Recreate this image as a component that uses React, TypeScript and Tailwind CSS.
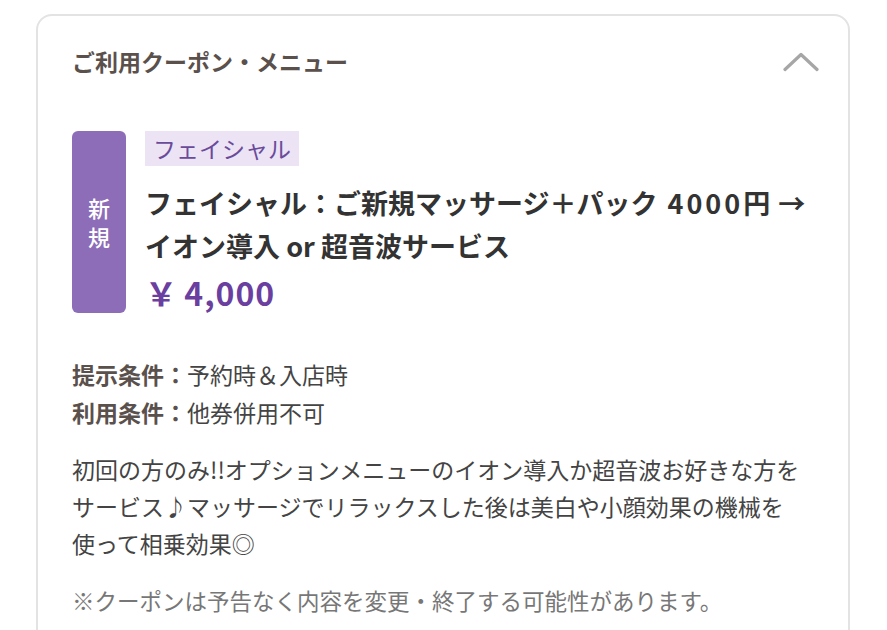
import React from "react";

const font = { fontFamily: '"Noto Sans CJK JP", "Noto Sans", sans-serif' };

export default function App() {
  return (
    <div className="w-[887px] h-[630px] overflow-hidden bg-white" style={font}>
      <div className="mt-[14px] ml-[36px] w-[814px] h-[700px] border-2 border-[#e3e3e3] rounded-[16px] px-[34px] pt-[21px]">
        <div className="flex h-[48px] items-center justify-between">
          <div className="text-[23px] font-bold text-[#5a504c]">ご利用クーポン・メニュー</div>
          <svg width="36" height="20" viewBox="0 0 36 20" className="mr-[-5px] mt-[2px]">
            <polyline points="2,17.5 18,2.5 34,17.5" fill="none" stroke="#a6a6a6" strokeWidth="3.2" strokeLinecap="round" strokeLinejoin="round" />
          </svg>
        </div>

        <div className="mt-[46px] flex gap-[19px]">
          <div className="w-[54px] h-[182px] shrink-0 rounded-[6px] bg-[#8d6cb8] flex flex-col items-center justify-center text-white text-[22px] font-medium leading-[29px]">
            <span>新</span>
            <span>規</span>
          </div>
          <div className="flex-1 min-w-0">
            <div className="inline-block h-[35px] bg-[#ece3f5] px-[8px] text-[23px] leading-[35px] text-[#6a4b9a]">
              フェイシャル
            </div>
            <div className="mt-[15px] whitespace-nowrap text-[27px] font-bold leading-[43px] text-[#333333]">
              フェイシャル：ご新規マッサージ＋パック<span className="ml-[10px] tracking-[3px]">4000</span>円<span className="ml-[8px]">→</span>
              <br />
              イオン導入 or 超音波サービス
            </div>
            <div className="mt-[5px] text-[32px] font-bold leading-[40px] text-[#6b3fa0]">
              ￥ <span className="tracking-[1px]">4,000</span>
            </div>
          </div>
        </div>

        <div className="mt-[42px] text-[23px] leading-[38px] text-[#444444]">
          <div>
            <span className="font-bold text-[#5a504c]">提示条件：</span>予約時＆入店時
          </div>
          <div>
            <span className="font-bold text-[#5a504c]">利用条件：</span>他券併用不可
          </div>
        </div>

        <div className="mt-[20px] whitespace-nowrap text-[23px] leading-[37px] text-[#444444]">
          初回の方のみ!!オプションメニューのイオン導入か超音波お好きな方を
          <br />
          サービス♪マッサージでリラックスした後は美白や小顔効果の機械を
          <br />
          使って相乗効果◎
        </div>

        <div className="mt-[20px] text-[22.5px] leading-[37px] text-[#777777]">
          ※クーポンは予告なく内容を変更・終了する可能性があります。
        </div>
      </div>
    </div>
  );
}
